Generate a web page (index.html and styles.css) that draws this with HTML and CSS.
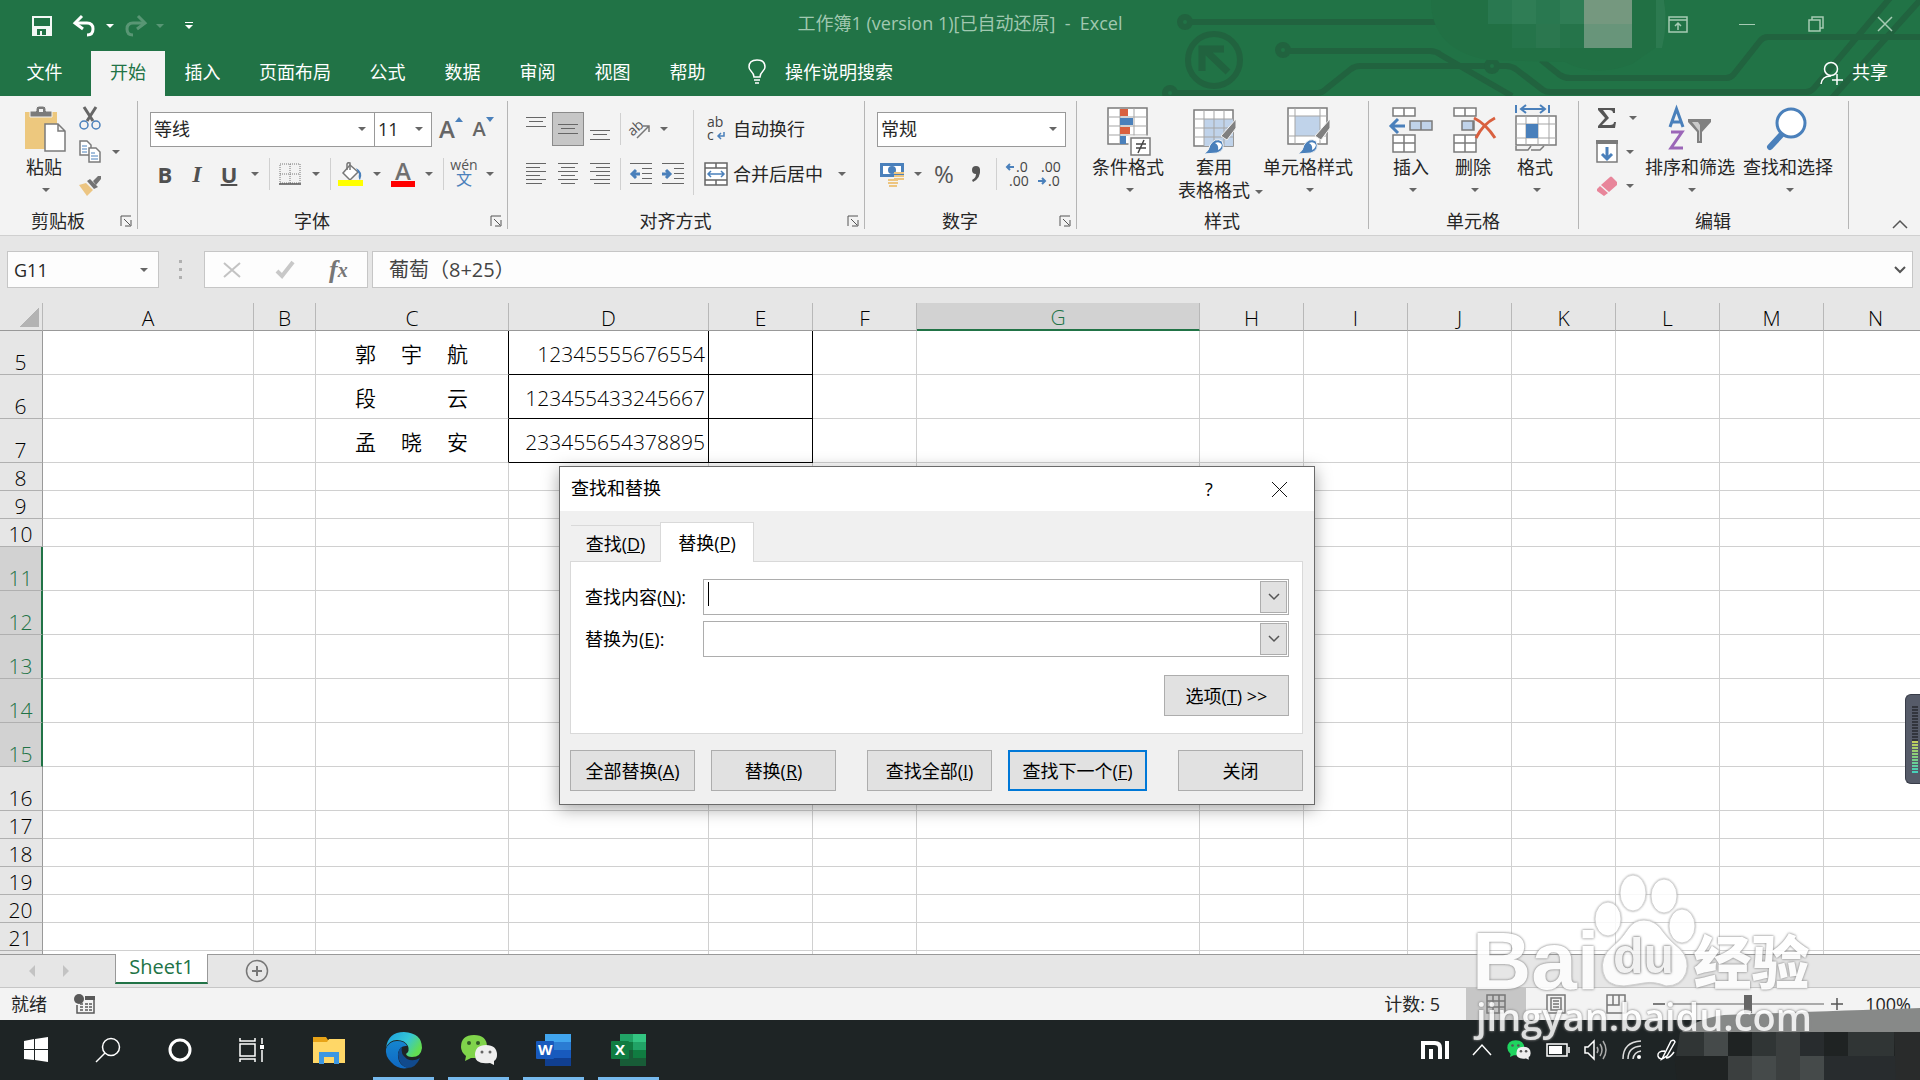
FILE: index.html
```html
<!DOCTYPE html>
<html lang="zh-CN">
<head>
<meta charset="utf-8">
<title>工作簿1 - Excel</title>
<link rel="stylesheet" href="styles.css">
</head>
<body>
<header class="top">
  <svg class="circuit" width="760" height="96" viewBox="1160 0 760 96" aria-hidden="true">
    <g fill="none" stroke="#21633f" stroke-width="6">
      <circle cx="1185" cy="22" r="5"/><path d="M1190 22H1440"/>
      <circle cx="1214" cy="60" r="26"/><path d="M1228 72L1205 50M1202 71V49H1224" stroke-width="7"/>
      <circle cx="1283" cy="50" r="5"/><path d="M1288 51H1430Q1436 51 1441 55L1512 96"/>
      <circle cx="1170" cy="93" r="5"/><path d="M1175 93H1318Q1322 93 1326 89L1351 69Q1355 66 1360 66H1487"/>
      <circle cx="1492" cy="66" r="5"/><path d="M1497 66H1506Q1512 66 1517 70L1543 90Q1546 92 1551 92H1806Q1811 92 1814 88L1890 -2"/>
      <path d="M1541 60L1560 75Q1564 78 1570 78H1726Q1731 78 1734 74L1760 41Q1763 37 1768 37H1920M1922 -2L1832 98"/>
    </g>
    <g>
      <path fill="#217044" d="M1431 0H1665Q1665 30 1655 48L1632 64Q1595 78 1565 62L1488 60Q1431 50 1431 0Z"/>
      <path fill="#297850" d="M1488 0H1584V24H1488Z"/><path fill="#2f7d55" d="M1512 0H1536V24H1512ZM1560 0H1584V24H1560Z"/>
      <path fill="#25744a" d="M1512 24H1584V48H1512Z"/><path fill="#2b774f" d="M1536 24H1560V48H1536Z"/>
      <path fill="#75987f" d="M1584 0H1632V24H1584Z"/><path fill="#68957a" d="M1584 24H1632V48H1584Z"/>
      <path fill="#2c7a50" d="M1656 0H1664Q1668 24 1662 48H1656Z"/>
    </g>
  </svg>
  <div class="titlebar">
    <div class="quick">
      <button class="q-btn" aria-label="保存"><svg width="22" height="22" viewBox="0 0 22 22"><path fill="#fff" fill-rule="evenodd" d="M1 1H21V21H1ZM3 3V11H19V3ZM6 14V20H9V16H11V20H15V14Z" opacity=".95"/></svg></button>
      <button class="q-btn" aria-label="撤消"><svg width="24" height="22" viewBox="0 0 24 22"><path d="M3 8H14Q20 8 20 14T14 20" fill="none" stroke="#fff" stroke-width="3"/><path d="M9 1L2 8L10 14" fill="none" stroke="#fff" stroke-width="3"/></svg></button>
      <button class="dd white" aria-label="撤消列表"></button>
      <button class="q-btn faded" aria-label="恢复"><svg width="24" height="22" viewBox="0 0 24 22"><path d="M21 8H10Q4 8 4 14T10 20" fill="none" stroke="#fff" stroke-width="3"/><path d="M15 1L22 8L14 14" fill="none" stroke="#fff" stroke-width="3"/></svg></button>
      <button class="dd white faded" aria-label="恢复列表"></button>
      <button class="q-btn custom" aria-label="自定义快速访问工具栏"><svg width="8" height="8" viewBox="0 0 8 8"><path fill="#fff" d="M0 0H8V1H0ZM0 3H8L4 7Z"/></svg></button>
    </div>
    <h1 class="title">工作簿1 (version 1)[已自动还原]  -  Excel</h1>
    <div class="win">
      <button aria-label="功能区显示选项"><svg width="20" height="17" viewBox="0 0 20 17"><path d="M1 1H19V16H1ZM1 4H19M10 14V7M7 10L10 7L13 10" fill="none" stroke="#a6cbb4" stroke-width="1.500"/></svg></button>
      <button aria-label="最小化"><svg width="16" height="16" viewBox="0 0 16 16"><path d="M0 8.500H16" stroke="#a6cbb4" stroke-width="1"/></svg></button>
      <button aria-label="还原"><svg width="16" height="16" viewBox="0 0 16 16"><path d="M1 4H12V15H1ZM4 4V1H15V12H12" fill="none" stroke="#a6cbb4" stroke-width="1.500"/></svg></button>
      <button aria-label="关闭窗口"><svg width="16" height="16" viewBox="0 0 16 16"><path d="M1 1L15 15M15 1L1 15" stroke="#a6cbb4" stroke-width="1.500"/></svg></button>
    </div>
  </div>
  <nav class="tabs">
    <button class="file">文件</button>
    <button class="on">开始</button>
    <button>插入</button>
    <button>页面布局</button>
    <button>公式</button>
    <button>数据</button>
    <button>审阅</button>
    <button>视图</button>
    <button>帮助</button>
    <button class="tell"><svg width="20" height="26" viewBox="0 0 20 26"><path d="M7 18Q7 15 4 12Q2 10 2 8Q2 1 10 1T18 8Q18 10 16 12Q13 15 13 18ZM7 21H13M8 24H12" fill="none" stroke="#fff" stroke-width="1.500"/></svg>操作说明搜索</button>
    <button class="share"><svg width="24" height="26" viewBox="0 0 24 26"><g fill="none" stroke="#fff" stroke-width="1.500"><circle cx="11" cy="10" r="6.500"/><path d="M1 25Q2 17 11 17M17 15V26M12 21H23"/></g></svg>共享</button>
  </nav>
</header>

<section class="ribbon">
  <div class="group clip">
    <div class="body">
      <button class="big paste"><svg width="44" height="48" viewBox="0 0 44 48"><path fill="#edc87e" d="M3 7H35V44H3Z"/><path fill="#7b7b7b" stroke="#f3f3f3" d="M8 12V6H14V4Q14 1 17 1H21Q24 1 24 4V6H30V12Z"/><path fill="#f3f3f3" d="M17 4H21V7H17Z"/><path fill="#fff" stroke="#7b7b7b" stroke-width="1.500" d="M23 19H36L43 26V46H23ZM36 19V26H43"/></svg><span>粘贴</span><i class="tri"></i></button>
      <div class="stack">
        <div class="row"><button class="ic" aria-label="剪切"><svg width="22" height="24" viewBox="0 0 22 24"><path d="M5 1L14 15M17 1L8 15" stroke="#666" stroke-width="3"/><g fill="none" stroke="#4a80bb" stroke-width="1.500"><circle cx="5" cy="19" r="4"/><circle cx="17" cy="19" r="4"/></g></svg></button></div>
        <div class="row"><button class="ic" aria-label="复制"><svg width="22" height="24" viewBox="0 0 22 24"><g fill="#fff" stroke="#7b7b7b" stroke-width="1.500"><path d="M1 1H8L12 5V15H1Z"/><path d="M10 8H17L21 12V22H10Z"/></g><path d="M3 6H8M3 9H8M3 12H8M12 13H16M12 16H19M12 19H19" stroke="#4a80bb"/></svg></button><button class="dd" aria-label="复制选项"></button></div>
        <div class="row"><button class="ic" aria-label="格式刷"><svg width="24" height="22" viewBox="0 0 24 22"><path fill="#ecc582" d="M1 10L8 8L15 15L9 21Z"/><path fill="#737373" d="M9 6L12 4L20 12L16 14ZM15 6L20 1L23 1V4L18 10Z"/></svg></button></div>
      </div>
    </div>
    <div class="cap"><span>剪贴板</span><button class="launch" aria-label="剪贴板设置"><svg width="12" height="12" viewBox="0 0 12 12"><path d="M1 11V1H11M4 4L10 10M11 5V11H5" fill="none" stroke="#555" stroke-width="1"/></svg></button></div>
  </div>

  <div class="group font">
    <div class="body col">
      <div class="line">
        <label class="sel w-font"><select aria-label="字体"><option>等线</option></select></label>
        <label class="sel w-size"><select aria-label="字号"><option>11</option></select></label>
        <button class="ic letter" aria-label="增大字号">A<svg width="8" height="5" viewBox="0 0 8 5"><path fill="#4a80bb" d="M0 5L4 0L8 5Z"/></svg></button>
        <button class="ic letter small" aria-label="减小字号">A<svg width="8" height="5" viewBox="0 0 8 5"><path fill="#4a80bb" d="M0 0L4 5L8 0Z"/></svg></button>
      </div>
      <div class="line">
        <button class="ic b">B</button><button class="ic i">I</button><button class="ic u">U</button><button class="dd" aria-label="下划线选项"></button><i class="sep"></i>
        <button class="ic" aria-label="边框"><svg width="22" height="22" viewBox="0 0 22 22"><path d="M1 1H21V20H1ZM11 1V20M1 11H21" fill="none" stroke="#777" stroke-width="1" stroke-dasharray="1 1"/><path d="M0 21H22" stroke="#555" stroke-width="1.500"/></svg></button><button class="dd" aria-label="边框选项"></button><i class="sep"></i>
        <button class="ic" aria-label="填充颜色"><svg width="26" height="26" viewBox="0 0 26 26"><path fill="#fff" stroke="#777" stroke-width="1.500" d="M12 4L20 11L12 19L5 12Z"/><path d="M9 9V3Q10 1 12 2V9" fill="none" stroke="#777" stroke-width="1.500"/><path fill="#4a80bb" d="M18 7Q26 11 22 19Q20 17 21 13Z"/><path fill="#ff0" d="M0 19H25V25H0Z"/></svg></button><button class="dd" aria-label="填充颜色选项"></button>
        <button class="ic fc" aria-label="字体颜色">A</button><button class="dd" aria-label="字体颜色选项"></button><i class="sep"></i>
        <button class="ic wen"><span>wén</span><b>文</b></button><button class="dd" aria-label="拼音选项"></button>
      </div>
    </div>
    <div class="cap"><span>字体</span><button class="launch" aria-label="字体设置"><svg width="12" height="12" viewBox="0 0 12 12"><path d="M1 11V1H11M4 4L10 10M11 5V11H5" fill="none" stroke="#555" stroke-width="1"/></svg></button></div>
  </div>

  <div class="group align">
    <div class="body">
      <div class="col">
        <div class="line">
          <button class="ic" aria-label="顶端对齐"><svg width="20" height="26" viewBox="0 0 20 26"><path d="M0 1.500H20M3 5.500H17M0 10.500H20" stroke="#666" stroke-width="1"/></svg></button>
          <button class="ic sel-on" aria-label="垂直居中"><svg width="20" height="26" viewBox="0 0 20 26"><path d="M0 8.500H20M3 12.500H17M0 17.500H20" stroke="#666" stroke-width="1"/></svg></button>
          <button class="ic" aria-label="底端对齐"><svg width="20" height="26" viewBox="0 0 20 26"><path d="M0 14.500H20M3 18.500H17M0 23.500H20" stroke="#666" stroke-width="1"/></svg></button><i class="sep"></i>
          <button class="ic" aria-label="方向"><svg width="24" height="22" viewBox="0 0 24 22"><text x="0" y="14" font-size="14" fill="#555" transform="rotate(-42 8 12)">ab</text><path d="M8 20L20 8M14 8H20V14" fill="none" stroke="#777" stroke-width="1.500"/></svg></button><button class="dd near" aria-label="方向选项"></button>
        </div>
        <div class="line">
          <button class="ic" aria-label="左对齐"><svg width="20" height="22" viewBox="0 0 20 22"><path d="M0 .5H20M0 4.500H14M0 8.500H20M0 12.500H14M0 16.500H20M0 20.500H16" stroke="#666" stroke-width="1"/></svg></button>
          <button class="ic" aria-label="居中"><svg width="20" height="22" viewBox="0 0 20 22"><path d="M0 .5H20M3 4.500H17M0 8.500H20M3 12.500H17M0 16.500H20M3 20.500H17" stroke="#666" stroke-width="1"/></svg></button>
          <button class="ic" aria-label="右对齐"><svg width="20" height="22" viewBox="0 0 20 22"><path d="M0 .5H20M6 4.500H20M0 8.500H20M6 12.500H20M0 16.500H20M4 20.500H20" stroke="#666" stroke-width="1"/></svg></button><i class="sep"></i>
          <button class="ic" aria-label="减少缩进"><svg width="22" height="22" viewBox="0 0 22 22"><path d="M0 .5H22M12 5.500H22M12 10.500H22M12 15.500H22M0 20.500H22" stroke="#666" stroke-width="1"/><path d="M10 11H3M6 7L2 11L6 15" fill="none" stroke="#4a80bb" stroke-width="3"/></svg></button>
          <button class="ic" aria-label="增加缩进"><svg width="22" height="22" viewBox="0 0 22 22"><path d="M0 .5H22M12 5.500H22M12 10.500H22M12 15.500H22M0 20.500H22" stroke="#666" stroke-width="1"/><path d="M0 11H7M4 7L8 11L4 15" fill="none" stroke="#4a80bb" stroke-width="3"/></svg></button>
        </div>
      </div>
      <i class="sep tall"></i>
      <div class="col">
        <div class="line"><button class="txt"><svg width="24" height="26" viewBox="0 0 24 26"><text x="3" y="11" font-size="14" fill="#444">ab</text><text x="3" y="24" font-size="14" fill="#444">c</text><path d="M20 16V20H14M17 17L14 20L17 23" fill="none" stroke="#4a80bb" stroke-width="1.500"/></svg>自动换行</button></div>
        <div class="line"><button class="txt"><svg width="24" height="24" viewBox="0 0 24 24"><path fill="#fff" stroke="#666" stroke-width="1.500" d="M1 1H23V23H1Z"/><path d="M1 6H23M1 18H23M12 1V6M12 18V23" stroke="#666" stroke-width="1.500"/><path d="M4 12H20M7 9L4 12L7 15M17 9L20 12L17 15" fill="none" stroke="#4a80bb" stroke-width="1.500"/></svg>合并后居中</button><button class="dd" aria-label="合并选项"></button></div>
      </div>
    </div>
    <div class="cap"><span>对齐方式</span><button class="launch" aria-label="对齐设置"><svg width="12" height="12" viewBox="0 0 12 12"><path d="M1 11V1H11M4 4L10 10M11 5V11H5" fill="none" stroke="#555" stroke-width="1"/></svg></button></div>
  </div>

  <div class="group number">
    <div class="body col">
      <div class="line"><label class="sel w-num"><select aria-label="数字格式"><option>常规</option></select></label></div>
      <div class="line">
        <button class="ic" aria-label="会计数字格式"><svg width="24" height="24" viewBox="0 0 24 24"><path fill="#4a80bb" d="M0 1H24V15H0Z"/><path fill="#fff" d="M3 4H21V12H3Z"/><circle cx="12" cy="8" r="4" fill="#4a80bb"/><path d="M14 11H24M14 14H24M14 17H24M8 18H18M8 21H18M9 24H17" stroke="#edc580" stroke-width="2"/></svg></button><button class="dd" aria-label="货币选项"></button>
        <button class="ic pct">%</button><button class="ic" aria-label="千位分隔"><svg width="10" height="18" viewBox="0 0 10 18"><circle cx="5" cy="5" r="4" fill="#555"/><path d="M9 4Q10 13 2 17L1 15Q6 12 5 7Z" fill="#555"/></svg></button><i class="sep"></i>
        <button class="ic" aria-label="增加小数位数"><svg width="24" height="26" viewBox="0 0 24 26"><text x="11" y="11" font-size="14" fill="#444">.0</text><text x="4" y="25" font-size="14" fill="#444">.00</text><path d="M9 6H2M5 3L2 6L5 9" fill="none" stroke="#4a80bb" stroke-width="2"/></svg></button>
        <button class="ic" aria-label="减少小数位数"><svg width="24" height="26" viewBox="0 0 24 26"><text x="4" y="11" font-size="14" fill="#444">.00</text><text x="11" y="25" font-size="14" fill="#444">.0</text><path d="M1 20H8M5 17L8 20L5 23" fill="none" stroke="#4a80bb" stroke-width="2"/></svg></button>
      </div>
    </div>
    <div class="cap"><span>数字</span><button class="launch" aria-label="数字设置"><svg width="12" height="12" viewBox="0 0 12 12"><path d="M1 11V1H11M4 4L10 10M11 5V11H5" fill="none" stroke="#555" stroke-width="1"/></svg></button></div>
  </div>

  <div class="group styles">
    <div class="body">
      <button class="big w-l"><svg width="44" height="48" viewBox="0 0 44 48"><path fill="#fff" stroke="#7b7b7b" stroke-width="1.500" d="M2 3H41V39H2Z"/><path d="M2 12H41M2 21H41M2 30H41M14 3V39M28 3V39" stroke="#a5a5a5"/><path fill="#d9603f" d="M14 4H22V11H14ZM14 22H24V29H14Z"/><path fill="#4a80bb" d="M14 13H27V20H14ZM14 31H20V39H14Z"/><path fill="#fff" stroke="#f3f3f3" stroke-width="3" d="M24 32H43V50H24Z"/><path fill="#fff" stroke="#7b7b7b" stroke-width="1.500" d="M25 33H44V50H25Z"/><path d="M30 39H40M30 43H40M38 35L32 48" fill="none" stroke="#444" stroke-width="1.500"/></svg><span>条件格式</span><i class="tri"></i></button>
      <button class="big w-l2"><svg width="44" height="48" viewBox="0 0 44 48"><path fill="#fff" stroke="#7b7b7b" stroke-width="1.500" d="M2 5H41V41H2Z"/><path fill="#c0d3ea" d="M12 14H41V41H12Z"/><path d="M2 14H41M2 23H41M2 32H41M12 5V41M22 5V41M32 5V41" stroke="#a5a5a5"/><use href="#brush"/></svg><span>套用<br>表格格式<i class="tri inline"></i></span></button>
      <button class="big w-x"><svg width="44" height="48" viewBox="0 0 44 48"><path fill="#fff" stroke="#7b7b7b" stroke-width="1.500" d="M2 3H41V39H2Z"/><path fill="#c0d3ea" d="M9 11H34V31H9Z"/><path d="M2 11H41M2 31H41M9 3V39M34 3V39" stroke="#a5a5a5"/><g id="brush"><path fill="#808080" stroke="#f3f3f3" d="M44 14V23L35 35L29 31Z"/><path fill="#4a80bb" stroke="#f3f3f3" d="M12 49Q17 46 18 40Q23 32 30 36Q34 45 25 48Z"/><path fill="#fff" d="M23 38Q28 36 30 40Q29 44 26 45Q27 40 23 38Z"/></g></svg><span>单元格样式</span><i class="tri"></i></button>
    </div>
    <div class="cap"><span>样式</span></div>
  </div>

  <div class="group cells">
    <div class="body">
      <button class="big w-s"><svg width="44" height="48" viewBox="0 0 44 48"><g fill="#fff" stroke="#7b7b7b" stroke-width="1.500"><path d="M4 3H26V11H4ZM15 3V11M4 30H26V47H4ZM15 30V47M4 38H26"/><path fill="#c0d3ea" d="M21 16H43V25H21ZM32 16V25"/></g><path d="M16 21H2M9 14L2 21L9 28" fill="none" stroke="#4a80bb" stroke-width="3"/></svg><span>插入</span><i class="tri"></i></button>
      <button class="big w-s"><svg width="44" height="48" viewBox="0 0 44 48"><g fill="#fff" stroke="#7b7b7b" stroke-width="1.500"><path d="M3 3H25V11H3ZM14 3V11M3 30H25V47H3ZM14 30V47M3 38H25"/><path fill="#c0d3ea" d="M11 16H23V25H11ZM22 16V25"/></g><path d="M23 13Q35 19 44 33M44 13Q32 19 25 33" fill="none" stroke="#d9603f" stroke-width="3"/></svg><span>删除</span><i class="tri"></i></button>
      <button class="big w-s"><svg width="44" height="50" viewBox="0 0 44 50"><path d="M3 1V9M36 1V9M8 5H31M13 1L8 5L13 9M27 1L32 5L27 9" fill="none" stroke="#4a80bb" stroke-width="2"/><path fill="#fff" stroke="#7b7b7b" stroke-width="1.500" d="M3 12H43V41H3Z"/><path d="M3 20H43M3 34H43M13 12V41M25 12V41M36 12V41" stroke="#a5a5a5"/><path fill="#4a80bb" d="M13 20H25V34H13Z"/><path d="M3 42V46H15L18 42M18 46H27L31 42" fill="none" stroke="#7b7b7b" stroke-width="1.500"/></svg><span>格式</span><i class="tri"></i></button>
    </div>
    <div class="cap"><span>单元格</span></div>
  </div>

  <div class="group edit">
    <div class="body">
      <div class="stack">
        <div class="row"><button class="ic" aria-label="自动求和"><svg width="22" height="22" viewBox="0 0 22 22"><path fill="#555" d="M2 1H19V6H17Q17 3 13 3H7L13 11L6 18H14Q18 18 18 15H20L19 21H2V19L9 11L2 3Z"/></svg></button><button class="dd" aria-label="求和选项"></button></div>
        <div class="row"><button class="ic" aria-label="填充"><svg width="22" height="24" viewBox="0 0 22 24"><path fill="#fff" stroke="#7b7b7b" stroke-width="1.500" d="M1 1H21V22H1Z"/><path fill="#7b7b7b" d="M0 0H22V4H0Z"/><path d="M11 7V19M6 14L11 19L16 14" fill="none" stroke="#4a80bb" stroke-width="3"/></svg></button><button class="dd near" aria-label="填充选项"></button></div>
        <div class="row"><button class="ic" aria-label="清除"><svg width="22" height="22" viewBox="0 0 22 22"><path fill="#e8859a" d="M14 2Q15 1 16 2L21 7V10L13 17L5 10ZM4 11L12 18L8 21L1 16V14Z"/></svg></button><button class="dd near" aria-label="清除选项"></button></div>
      </div>
      <button class="big w-x"><svg width="44" height="48" viewBox="0 0 44 48"><path d="M2 22L8.500 4L15 22M4 17H13" fill="none" stroke="#4a80bb" stroke-width="3"/><path d="M3 27H14L3 43H15" fill="none" stroke="#9b66b8" stroke-width="3"/><path fill="#808080" d="M20 14H43V17L34 27V38H29V27L20 17Z"/><path fill="#c9c9c9" d="M24 17H30L32 20V36H31V26Z"/></svg><span>排序和筛选</span><i class="tri"></i></button>
      <button class="big w-x"><svg width="44" height="48" viewBox="0 0 44 48"><path d="M4 42L17 28" stroke="#4a80bb" stroke-width="6" stroke-linecap="round"/><circle cx="25" cy="18" r="14" fill="#fff" stroke="#4a80bb" stroke-width="3"/></svg><span>查找和选择</span><i class="tri"></i></button>
    </div>
    <div class="cap"><span>编辑</span></div>
  </div>
  <button class="collapse" aria-label="折叠功能区"><svg width="16" height="9" viewBox="0 0 16 9"><path d="M1 8L8 1L15 8" fill="none" stroke="#555" stroke-width="1.500"/></svg></button>
</section>

<section class="fbar">
  <label class="namebox"><input value="G11" aria-label="名称框"><i class="tri"></i></label>
  <span class="dots"></span>
  <div class="fbtns">
    <button aria-label="取消"><svg width="18" height="16" viewBox="0 0 18 16"><path d="M1 1L17 15M17 1L1 15" stroke="#c3c3c3" stroke-width="2"/></svg></button>
    <button aria-label="输入"><svg width="20" height="18" viewBox="0 0 20 18"><path d="M2 10L7 15L18 1" fill="none" stroke="#c8c8c8" stroke-width="4"/></svg></button>
    <button class="fx" aria-label="插入函数">f<sub>x</sub></button>
  </div>
  <label class="formula"><input value="葡萄（8+25）" aria-label="编辑栏"><svg width="12" height="8" viewBox="0 0 12 8"><path d="M1 1L6 6L11 1" fill="none" stroke="#555" stroke-width="2"/></svg></label>
</section>

<main class="sheet">
<table>
<colgroup><col class="c-h"><col class="c-a"><col class="c-b"><col class="c-c"><col class="c-d"><col class="c-n"><col class="c-n"><col class="c-g"><col class="c-n"><col class="c-n"><col class="c-n"><col class="c-n"><col class="c-n"><col class="c-n"><col class="c-n"></colgroup>
<thead><tr><th class="corner"></th><th>A</th><th>B</th><th>C</th><th>D</th><th>E</th><th>F</th><th class="on">G</th><th>H</th><th>I</th><th>J</th><th>K</th><th>L</th><th>M</th><th>N</th></tr></thead>
<tbody>
<tr class="t bx"><th>5</th><td></td><td></td><td><div class="spread"><span>郭</span><span>宇</span><span>航</span></div></td><td>12345555676554</td><td></td><td></td><td></td><td></td><td></td><td></td><td></td><td></td><td></td><td></td></tr>
<tr class="t bx"><th>6</th><td></td><td></td><td><div class="spread"><span>段</span><span>云</span></div></td><td>123455433245667</td><td></td><td></td><td></td><td></td><td></td><td></td><td></td><td></td><td></td><td></td></tr>
<tr class="t bx"><th>7</th><td></td><td></td><td><div class="spread"><span>孟</span><span>晓</span><span>安</span></div></td><td>233455654378895</td><td></td><td></td><td></td><td></td><td></td><td></td><td></td><td></td><td></td><td></td></tr>
<tr><th>8</th><td></td><td></td><td></td><td></td><td></td><td></td><td></td><td></td><td></td><td></td><td></td><td></td><td></td><td></td></tr>
<tr><th>9</th><td></td><td></td><td></td><td></td><td></td><td></td><td></td><td></td><td></td><td></td><td></td><td></td><td></td><td></td></tr>
<tr><th>10</th><td></td><td></td><td></td><td></td><td></td><td></td><td></td><td></td><td></td><td></td><td></td><td></td><td></td><td></td></tr>
<tr class="t"><th class="on">11</th><td></td><td></td><td></td><td></td><td></td><td></td><td></td><td></td><td></td><td></td><td></td><td></td><td></td><td></td></tr>
<tr class="t"><th class="on">12</th><td></td><td></td><td></td><td></td><td></td><td></td><td></td><td></td><td></td><td></td><td></td><td></td><td></td><td></td></tr>
<tr class="t"><th class="on">13</th><td></td><td></td><td></td><td></td><td></td><td></td><td></td><td></td><td></td><td></td><td></td><td></td><td></td><td></td></tr>
<tr class="t"><th class="on">14</th><td></td><td></td><td></td><td></td><td></td><td></td><td></td><td></td><td></td><td></td><td></td><td></td><td></td><td></td></tr>
<tr class="t"><th class="on">15</th><td></td><td></td><td></td><td></td><td></td><td></td><td></td><td></td><td></td><td></td><td></td><td></td><td></td><td></td></tr>
<tr class="t"><th>16</th><td></td><td></td><td></td><td></td><td></td><td></td><td></td><td></td><td></td><td></td><td></td><td></td><td></td><td></td></tr>
<tr><th>17</th><td></td><td></td><td></td><td></td><td></td><td></td><td></td><td></td><td></td><td></td><td></td><td></td><td></td><td></td></tr>
<tr><th>18</th><td></td><td></td><td></td><td></td><td></td><td></td><td></td><td></td><td></td><td></td><td></td><td></td><td></td><td></td></tr>
<tr><th>19</th><td></td><td></td><td></td><td></td><td></td><td></td><td></td><td></td><td></td><td></td><td></td><td></td><td></td><td></td></tr>
<tr><th>20</th><td></td><td></td><td></td><td></td><td></td><td></td><td></td><td></td><td></td><td></td><td></td><td></td><td></td><td></td></tr>
<tr><th>21</th><td></td><td></td><td></td><td></td><td></td><td></td><td></td><td></td><td></td><td></td><td></td><td></td><td></td><td></td></tr>
<tr><th></th><td></td><td></td><td></td><td></td><td></td><td></td><td></td><td></td><td></td><td></td><td></td><td></td><td></td><td></td></tr>
</tbody>
</table>
</main>

<div class="sheetbar">
  <button class="arrow" aria-label="上一个工作表"><svg width="8" height="12" viewBox="0 0 8 12"><path fill="#c3c3c3" d="M7 0V12L1 6Z"/></svg></button>
  <button class="arrow" aria-label="下一个工作表"><svg width="8" height="12" viewBox="0 0 8 12"><path fill="#c3c3c3" d="M1 0V12L7 6Z"/></svg></button>
  <button class="stab">Sheet1</button>
  <button class="add" aria-label="新工作表"><svg width="24" height="24" viewBox="0 0 24 24"><g fill="none" stroke="#777" stroke-width="1.500"><circle cx="12" cy="12" r="10.500"/><path d="M7 12H17M12 7V17" stroke-width="2"/></g></svg></button>
</div>

<footer class="status">
  <span>就绪</span>
  <svg class="macro" width="22" height="20" viewBox="0 0 22 20"><circle cx="5" cy="5" r="5" fill="#595959"/><path fill="#595959" d="M11 2H21V6H11Z"/><path d="M3 11V19H20V6M6 10H9M11 10H14M15 10H18M6 13H9M11 13H14M15 13H18M6 16H9M11 16H14M15 16H18" fill="none" stroke="#595959" stroke-width="1.500"/></svg>
  <span class="count">计数: 5</span>
  <button class="view on" aria-label="普通"><svg width="20" height="20" viewBox="0 0 20 20"><path d="M1 1H19V19H1ZM1 7H19M1 13H19M7 1V19M13 1V19" fill="none" stroke="#777" stroke-width="1.500"/></svg></button>
  <button class="view" aria-label="页面布局视图"><svg width="20" height="20" viewBox="0 0 20 20"><path d="M1 1H19V19H1ZM5 4H15V16H5ZM7 7H13M7 10H13M7 13H13" fill="none" stroke="#777" stroke-width="1.500"/></svg></button>
  <button class="view" aria-label="分页预览"><svg width="20" height="20" viewBox="0 0 20 20"><path d="M1 1H19V19H1ZM1 11H13V1M7 1V11" fill="none" stroke="#777" stroke-width="1.500"/></svg></button>
  <button class="zoom" aria-label="缩小"><svg width="12" height="12" viewBox="0 0 12 12"><path d="M0 6H12" stroke="#555" stroke-width="1.500"/></svg></button>
  <input class="slider" type="range" min="0" max="100" value="50" aria-label="显示比例">
  <button class="zoom" aria-label="放大"><svg width="12" height="12" viewBox="0 0 12 12"><path d="M0 6H12M6 0V12" stroke="#555" stroke-width="1.500"/></svg></button>
  <span class="pc">100%</span>
</footer>

<nav class="taskbar">
  <button aria-label="开始菜单"><svg width="26" height="26" viewBox="0 0 26 26"><path fill="#fff" d="M1 4L11 2V12H1ZM12 2L25 0V12H12ZM1 13H11V23L1 22ZM12 13H25V25L12 23Z"/></svg></button>
  <button aria-label="搜索"><svg width="26" height="26" viewBox="0 0 26 26"><g fill="none" stroke="#fff" stroke-width="1.500"><circle cx="16" cy="10" r="8.500"/><path d="M10 16L1 25"/></g></svg></button>
  <button aria-label="Cortana"><svg width="26" height="26" viewBox="0 0 26 26"><circle cx="13" cy="13" r="10" fill="none" stroke="#fff" stroke-width="3"/></svg></button>
  <button class="views" aria-label="任务视图"><svg width="26" height="26" viewBox="0 0 26 26"><path d="M1 1V4H16V1M1 7H16V19H1ZM1 25V22H16V25M23 1V7M23 13V25" fill="none" stroke="#fff" stroke-width="1.500"/><path fill="#fff" d="M21 8H25V12H21Z"/></svg></button>
  <button class="app" aria-label="文件资源管理器"><svg width="34" height="30" viewBox="0 0 34 30"><path fill="#e8a317" d="M1 2H14L16 5H32V12H1Z"/><path fill="#ffd767" d="M1 7H15L17 4H33V28H1Z"/><path fill="#3c97e3" d="M7 17H27V29H22V22H12V29H7Z"/></svg></button>
  <button class="app run" aria-label="Edge"><svg width="38" height="38" viewBox="0 0 38 38"><defs><linearGradient id="eg" x1="0" x2="1" y1="0" y2=".5"><stop stop-color="#1b9de2"/><stop offset=".6" stop-color="#35c6d6"/><stop offset="1" stop-color="#62dd52"/></linearGradient><linearGradient id="eb" x1="0" x2="0" y1="0" y2="1"><stop stop-color="#1585cf"/><stop offset="1" stop-color="#0f68c3"/></linearGradient></defs><path fill="url(#eg)" d="M1 17Q3 1 19 1Q37 2 37 17Q36 26 27 26Q22 26 21 23Q25 20 23 15Q20 9 12 9Q4 9 1 17Z"/><path fill="url(#eb)" d="M1 18Q4 10 12 10Q20 10 22 15Q15 14 13 22Q12 34 23 37Q13 39 6 31Q0 25 1 18Z"/><path fill="#114a8d" d="M13 23Q14 17 17 16Q15 23 22 28Q28 31 35 27Q31 37 22 37Q13 33 13 23Z"/></svg></button>
  <button class="app run" aria-label="微信"><svg width="38" height="34" viewBox="0 0 38 34"><path fill="#80d44b" d="M14 2Q27 2 27 14T14 25L11 25L5 28L6 23Q1 19 1 14Q1 2 14 2Z"/><circle cx="9" cy="10" r="2" fill="#315c25"/><circle cx="18" cy="10" r="2" fill="#315c25"/><path fill="#eee" d="M26 12Q37 12 37 22Q37 26 34 28L34 32L30 30Q15 32 15 22Q15 12 26 12Z"/><circle cx="22" cy="19" r="1.500" fill="#666"/><circle cx="30" cy="19" r="1.500" fill="#666"/></svg></button>
  <button class="app run" aria-label="Word"><svg width="38" height="34" viewBox="0 0 38 34"><path fill="#41a5ee" d="M10 1H36V9H10Z"/><path fill="#2b7cd3" d="M10 9H36V17H10Z"/><path fill="#185abd" d="M10 17H36V25H10Z"/><path fill="#103f91" d="M10 25H36V33H10Z"/><rect y="8" x="1" width="18" height="18" rx="1" fill="#185abd"/><text x="3" y="22" font-size="15" font-weight="700" fill="#fff">W</text></svg></button>
  <button class="app run" aria-label="Excel"><svg width="38" height="34" viewBox="0 0 38 34"><path fill="#21a366" d="M10 1H23V9H10Z"/><path fill="#33c481" d="M23 1H36V9H23Z"/><path fill="#107c41" d="M10 9H23V17H10ZM23 17H36V25H23Z"/><path fill="#21a366" d="M23 9H36V17H23Z"/><path fill="#185c37" d="M10 17H23V25H36V33H10Z"/><rect y="8" x="1" width="18" height="18" rx="1" fill="#107c41"/><text x="5" y="22" font-size="15" font-weight="700" fill="#fff">X</text></svg></button>
  <div class="tray">
    <svg width="30" height="20" viewBox="0 0 30 20"><path fill="#fff" d="M1 1H15Q22 1 22 8V19H18V8Q18 5 14 5H5V19H1ZM9 9H13V19H9ZM25 1H29V19H25Z"/></svg>
    <svg width="20" height="12" viewBox="0 0 20 12"><path d="M1 11L10 1L19 11" fill="none" stroke="#fff" stroke-width="1.500"/></svg>
    <svg width="26" height="22" viewBox="0 0 38 34"><path fill="#1fd45f" d="M14 2Q27 2 27 14T14 25L11 25L5 28L6 23Q1 19 1 14Q1 2 14 2Z"/><path fill="#eee" d="M26 12Q37 12 37 22Q37 26 34 28L34 32L30 30Q15 32 15 22Q15 12 26 12Z"/><g fill="#555"><circle cx="9" cy="10" r="2"/><circle cx="18" cy="10" r="2"/><circle cx="22" cy="19" r="2"/><circle cx="30" cy="19" r="2"/></g></svg>
    <svg width="24" height="14" viewBox="0 0 24 14"><path d="M1 1H21V13H1ZM23 4V10" fill="none" stroke="#fff" stroke-width="1.500"/><path fill="#fff" d="M3 3H16V11H3Z"/></svg>
    <svg width="24" height="20" viewBox="0 0 24 20"><path d="M1 7H4L10 1V19L4 13H1Z" fill="none" stroke="#fff" stroke-width="1.500"/><path d="M13 7Q15 10 13 13M16 4Q20 10 16 16M19 1Q25 10 19 19" fill="none" stroke="#aaa" stroke-width="1.500"/></svg>
    <svg width="20" height="20" viewBox="0 0 20 20"><path d="M1 19Q1 2 19 1M6 19Q6 7 19 6M11 19Q12 12 19 11" fill="none" stroke="#ddd" stroke-width="1.500"/><circle cx="17" cy="17" r="2" fill="#fff"/></svg>
    <svg width="20" height="22" viewBox="0 0 20 22"><path d="M6 20L15 2Q18 0 19 3L11 17ZM9 12Q1 12 2 17Q3 21 8 19M10 19Q14 19 18 13" fill="none" stroke="#fff" stroke-width="1.500"/></svg>
  </div>
</nav>

<svg class="mosaic" width="246" height="74" viewBox="0 0 246 74" aria-hidden="true">
  <path fill="#1f2323" d="M3 74Q-3 44 8 26H246V74Z"/>
  <path fill="#878988" d="M8 26Q24 12 50 9Q130 6 246 2V26Z"/>
  <g><path fill="#303535" d="M6 26H30V50H2ZM78 26H102V50H78ZM174 26H220V50H174Z"/><path fill="#454a4a" d="M30 26H54V50H30ZM78 50H102V74H78ZM126 50H150V74H126Z"/><path fill="#3b3f3f" d="M102 26H126V50H102ZM54 50H78V74H54ZM102 50H126V74H102Z"/><path fill="#282c2e" d="M126 26H150V50H126ZM150 50H222V74H150Z"/><path fill="#292b2b" d="M220 26H246V74H222Z"/></g>
</svg>

<div class="meter" aria-hidden="true"><i class="off"></i><i class="lit"></i></div>

<div class="mark" aria-hidden="true">
  <div class="logo">
    <span class="bai">Bai</span>
    <span class="paw"><svg width="100" height="120" viewBox="0 0 100 120"><g fill="#fff" stroke="#ccc" stroke-width="1"><ellipse cx="14" cy="46" rx="13" ry="17"/><ellipse cx="39" cy="20" rx="13" ry="18"/><ellipse cx="70" cy="23" rx="13" ry="17"/><ellipse cx="88" cy="53" rx="13" ry="17"/><path d="M50 47Q62 47 70 60Q76 68 86 76Q96 86 92 100Q87 113 72 113Q60 108 50 110Q38 112 30 113Q12 113 9 99Q6 84 18 74Q28 66 34 56Q40 47 50 47Z"/></g></svg><b>du</b></span>
    <span class="jy">经验</span>
  </div>
  <div class="url">jingyan.baidu.com</div>
</div>

<section class="dialog" role="dialog" aria-labelledby="dt">
  <div class="d-title"><h2 id="dt">查找和替换</h2><button aria-label="帮助信息">?</button><button aria-label="关闭对话框"><svg width="17" height="17" viewBox="0 0 17 17"><path d="M1 1L16 16M16 1L1 16" stroke="#111" stroke-width="1"/></svg></button></div>
  <div class="d-tabs"><button>查找(<u>D</u>)</button><button class="on">替换(<u>P</u>)</button></div>
  <div class="d-panel">
    <div class="field"><label for="f1">查找内容(<u>N</u>):</label><div class="combo"><i class="caret"></i><input id="f1" type="text"><button aria-label="查找历史"><svg width="12" height="8" viewBox="0 0 12 8"><path d="M1 1L6 6L11 1" fill="none" stroke="#555" stroke-width="1.500"/></svg></button></div></div>
    <div class="field"><label for="f2">替换为(<u>E</u>):</label><div class="combo"><input id="f2" type="text"><button aria-label="替换历史"><svg width="12" height="8" viewBox="0 0 12 8"><path d="M1 1L6 6L11 1" fill="none" stroke="#555" stroke-width="1.500"/></svg></button></div></div>
    <button class="btn opt">选项(<u>T</u>) &gt;&gt;</button>
  </div>
  <div class="d-foot">
    <button class="btn">全部替换(<u>A</u>)</button>
    <button class="btn g1">替换(<u>R</u>)</button>
    <button class="btn g2">查找全部(<u>I</u>)</button>
    <button class="btn g1 def">查找下一个(<u>F</u>)</button>
    <button class="btn g2">关闭</button>
  </div>
</section>
</body>
</html>
```
FILE: styles.css
```css
* { box-sizing: border-box; }
body {
  margin: 0;
  height: 100vh;
  display: flex;
  flex-direction: column;
  overflow: hidden;
  background: #e6e6e6;
  color: #262626;
  font: 18px/24px "Open Sans", "Noto Sans CJK SC", sans-serif;
}
button, input, select { font: inherit; color: inherit; background: none; border: 0; padding: 0; margin: 0; border-radius: 0; }
input, select { outline: 0; min-width: 0; }
button { display: flex; align-items: center; justify-content: center; white-space: nowrap; }
svg { display: block; flex: none; overflow: visible; }
h1, h2 { margin: 0; font-size: 18px; font-weight: 400; }

/* Title bar and ribbon tabs */
.top { position: relative; background: #217346; color: #fff; flex: none; }
.circuit { position: absolute; top: 0; right: 0; overflow: hidden; }
.titlebar { position: relative; display: grid; grid-template-columns: 1fr auto 1fr; height: 51px; }
.quick { display: flex; align-items: center; padding-left: 25px; }
.q-btn { width: 34px; height: 34px; }
.quick .q-btn:nth-child(2) { margin-left: 9px; }
.quick .custom { margin-left: 4px; }
.title { line-height: 46px; white-space: pre; color: #a0c8b0; }
.win { display: flex; justify-content: flex-end; height: 48px; padding-right: 1px; }
.win button { width: 69px; }
.faded { opacity: .25; }
.tabs { position: relative; display: flex; height: 45px; }
.tabs button { padding: 0 19px 3px; min-width: 75px; }
.tabs .file { width: 91px; padding-right: 21px; }
.tabs .on { background: #f3f3f3; color: #217346; min-width: 73px; }
.tabs .tell { gap: 18px; padding-left: 22px; }
.tabs .share { margin-left: auto; gap: 8px; padding-right: 32px; }

/* Shared little parts */
.tri, .dd::after, .sel::after { content: ""; display: block; border: 4px solid transparent; border-top: 4px solid #666; border-bottom: 0; }
.dd { width: 20px; height: 24px; flex: none; }
.dd.near { width: 14px; }
.dd.white::after { border-top-color: #fff; }
.quick .dd { width: 16px; }
.ic { width: 32px; height: 34px; flex: none; }
.sep { width: 1px; height: 32px; margin: 0 4px; background: #d0d0d0; flex: none; }
.sep.tall { height: 85px; margin-top: 9px; }

/* Ribbon */
.ribbon { display: flex; flex: none; height: 140px; background: #f3f3f3; border-bottom: 1px solid #d0d0d0; padding: 5px 0 6px; }
.group { display: flex; flex-direction: column; border-right: 1px solid #b5b5b5; }
.clip { width: 138px; }
.font { width: 370px; }
.align { width: 357px; }
.number { width: 212px; }
.styles { width: 292px; }
.cells { width: 210px; }
.edit { width: 270px; }
.body { display: flex; flex: 1; }
.col { display: flex; flex-direction: column; gap: 8px; padding-top: 10px; }
.line { display: flex; align-items: center; height: 36px; }
.col > .line + .line { height: 38px; }
.cap { display: flex; height: 24px; margin-bottom: -4px; padding-right: 1px; }
.cap span { flex: 1; text-align: center; line-height: 24px; }
.launch { width: 20px; }
.big { flex-direction: column; justify-content: flex-start; padding-top: 3px; }
.big svg { height: 50px; margin-bottom: 2px; }
.big span { line-height: 23px; text-align: center; }
.big .tri { margin: 9px 0 0 4px; }
.big .tri.inline { display: inline-block; margin: 0 -13px 3px 5px; }
.stack { display: flex; flex-direction: column; }
.row { display: flex; align-items: center; height: 34px; }
.paste { width: 70px; padding-left: 18px; }
.clip .stack { padding-left: 4px; }
.font .body, .number .body { padding-left: 11px; }
.align .body { padding-left: 12px; }
.styles .body { padding-left: 10px; }
.cells .body { padding-left: 11px; }
.edit .body { padding-left: 12px; }
.edit .stack { width: 50px; }
.w-l { width: 82px; }
.w-l2 { width: 90px; }
.w-x { width: 98px; }
.w-s { width: 62px; }
.sel { display: flex; align-items: center; height: 35px; padding: 0 8px 0 3px; border: 1px solid #999; background: #fff; }
.sel select { appearance: none; flex: 1; height: 30px; }
.w-font { width: 225px; margin-left: 1px; }
.w-size { width: 58px; margin-left: -1px; margin-right: 3px; }
.w-num { width: 189px; margin-left: 1px; }
.letter { font-size: 24px; font-weight: 600; color: #666; }
.letter svg { margin-bottom: 20px; }
.letter.small { font-size: 20px; }
.b, .u { font-size: 22px; font-weight: 700; color: #505050; }
.u { text-decoration: underline; text-decoration-thickness: 2px; }
.i { font: italic 700 24px/24px "Liberation Serif", serif; color: #505050; }
.fc { position: relative; font-size: 24px; font-weight: 600; color: #707070; line-height: 24px; padding-bottom: 6px; }
.fc::after { content: ""; position: absolute; left: 4px; right: 4px; bottom: 4px; height: 6px; background: red; }
.wen { flex-direction: column; font-size: 14px; line-height: 10px; color: #555; }
.wen b { font-size: 16px; line-height: 18px; font-weight: 400; color: #4a80bb; }
.sel-on { background: #c6c6c6; border: 1px solid #8a8a8a; }
.txt { gap: 5px; margin-left: 6px; }
.txt + .dd { margin-left: 9px; }
.pct { font-size: 24px; color: #555; }
.collapse { align-self: flex-end; margin-left: auto; width: 40px; height: 10px; }

/* Formula bar */
.fbar { display: flex; flex: none; height: 67px; padding: 15px 7px; }
.fbar label, .fbtns { display: flex; align-items: center; background: #fdfdfd; border: 1px solid #c6c6c6; }
.namebox { width: 152px; padding: 0 10px 0 6px; }
.namebox input { flex: 1; }
.dots { width: 3px; margin: 9px 22px 9px 20px; background: repeating-linear-gradient(#b0b0b0 0 3px, transparent 3px 8px); }
.fbtns { width: 164px; padding-right: 2px; }
.fbtns button { flex: 1; }
.fbtns .fx { font: italic 700 26px/26px "Liberation Serif", serif; color: #777; }
.fx sub { font-size: 20px; vertical-align: -2px; }
.formula { flex: 1; margin-left: 4px; padding: 0 6px 0 16px; }
.formula input { flex: 1; font-size: 20px; color: #444; }

/* Grid */
.sheet { flex: 1; min-height: 0; overflow: hidden; background: #fff; }
table { table-layout: fixed; width: 1928px; border-collapse: separate; border-spacing: 0; font-size: 21px; line-height: 24px; color: #000; font-weight: 300; }
.c-h { width: 43px; }
.c-a { width: 211px; }
.c-b { width: 62px; }
.c-c { width: 193px; }
.c-d { width: 200px; }
.c-n { width: 104px; }
.c-g { width: 283px; }
th, td { height: 28px; padding: 0; border-right: 1px solid #d0d0d0; border-bottom: 1px solid #d0d0d0; }
th { font-weight: 300; background: #e6e6e6; vertical-align: bottom; text-align: center; }
td { font-weight: 350; }
thead th { border-right-color: #b8b8b8; border-bottom-color: #999; }
tbody th { border-right-color: #999; border-bottom-color: #b0b0b0; padding-right: 1px; }
thead th.on { background: #d2d2d2; color: #217346; border-bottom: 2px solid #217346; }
tbody th.on { background: #d2d2d2; color: #217346; border-right: 2px solid #217346; padding-right: 0; }
.corner { background: linear-gradient(135deg, transparent 50%, #b3b3b3 50%) 20px 5px/19px 19px no-repeat #e6e6e6; }
.t th, .t td { height: 44px; }
.t td { padding-top: 2px; }
.bx td:nth-child(4) { border-right-color: #000; }
.bx td:nth-child(5), .bx td:nth-child(6) { border-color: #000; }
.bx td:nth-child(5) { text-align: right; padding-right: 3px; }
.spread { display: flex; justify-content: space-between; margin: 0 40px 0 39px; }

/* Sheet tabs */
.sheetbar { display: flex; flex: none; height: 33px; border-top: 1px solid #999; padding-left: 15px; }
.arrow { width: 34px; }
.stab { width: 93px; height: 30px; margin: -1px 36px 0 32px; background: #fff; border: 1px solid #999; border-top: 0; border-bottom: 2px solid #217346; color: #217346; font-size: 20px; font-weight: 500; padding-bottom: 3px; }
.add { width: 26px; }

/* Status bar */
.status { display: flex; align-items: center; flex: none; height: 33px; background: #f3f3f3; border-top: 1px solid #c6c6c6; padding: 0 9px 0 11px; }
.macro { margin-left: 27px; }
.count { margin-left: auto; margin-right: 26px; }
.view { width: 60px; height: 32px; }
.view.on { background: #c6c6c6; }
.zoom { width: 26px; height: 32px; }
.slider { appearance: none; width: 152px; height: 20px; background: linear-gradient(#aaa, #aaa) center/100% 2px no-repeat; }
.slider::-webkit-slider-thumb { appearance: none; width: 8px; height: 18px; background: #666; }
.pc { width: 61px; text-align: right; }

/* Taskbar */
.taskbar { display: flex; flex: none; height: 60px; background: #1e2425; }
.taskbar button { width: 72px; }
.taskbar .views { margin-right: 3px; }
.taskbar .app { width: 75px; position: relative; }
.run::after { content: ""; position: absolute; left: 7px; right: 7px; bottom: 0; height: 3px; background: #76b9ed; }
.tray { display: flex; align-items: center; gap: 14px; margin-left: auto; padding-right: 244px; }
.tray svg:first-child { margin-right: 8px; }

/* Overlays */
.mosaic { position: absolute; right: 0; bottom: 0; }
.meter { position: absolute; right: 0; top: 694px; width: 15px; height: 90px; padding: 11px 2px 9px 6px; background: #565b69; border: 1px solid #383c48; border-right: 0; border-radius: 6px 0 0 6px; }
.meter i { display: block; height: 35px; background: repeating-linear-gradient(#32353d 0 2px, #565b69 2px 3px); }
.meter .lit { height: 33px; background: repeating-linear-gradient(transparent 0 2px, #565b69 2px 3px), linear-gradient(#c5d05a, #7fd080, #3fd0c0); }
.mark { position: absolute; right: 104px; bottom: 41px; width: 344px; color: #fff; opacity: .85; text-shadow: 0 0 2px #888, 0 0 3px #888; }
.logo { display: flex; align-items: flex-end; height: 120px; font-weight: 700; }
.bai { font: 700 82px/64px "Liberation Sans", sans-serif; }
.paw { position: relative; margin-left: -6px; filter: drop-shadow(0 0 1px #999); }
.paw b { position: absolute; left: 0; right: 0; bottom: 12px; text-align: center; font: 700 50px/50px "Liberation Sans", sans-serif; color: #f4f4f4; text-shadow: 0 0 2px #666, 0 0 3px #666; }
.jy { font: 900 58px/68px "Noto Sans CJK SC", sans-serif; }
.url { font: 600 38px/46px "Open Sans", sans-serif; text-align: center; }

/* Find and replace */
.dialog { position: absolute; left: 559px; top: 466px; width: 756px; background: #f0f0f0; border: 1px solid #6b6b6b; box-shadow: 0 4px 16px rgba(0, 0, 0, .35); color: #000; padding-bottom: 13px; }
.d-title { display: flex; height: 44px; background: #fff; }
.d-title h2 { flex: 1; padding-left: 11px; line-height: 43px; }
.d-title button { width: 70px; }
.d-tabs { display: flex; align-items: flex-end; height: 50px; padding-left: 11px; }
.d-tabs button { height: 36px; width: 89px; border-top: 1px solid #d9d9d9; }
.d-tabs .on { position: relative; height: 40px; width: 94px; margin-bottom: -1px; background: #fff; border: 1px solid #d9d9d9; border-bottom: 0; }
.d-panel { display: flex; flex-direction: column; gap: 6px; margin: 0 11px 0 10px; padding: 17px 13px 17px 14px; background: #fff; border: 1px solid #d9d9d9; }
.field { display: flex; align-items: center; }
.field label { width: 118px; }
.combo { display: flex; flex: 1; height: 36px; padding: 1px; border: 1px solid #adadad; }
.combo input { flex: 1; padding: 0 4px; }
.combo button { width: 27px; background: #e1e1e1; border: 1px solid #adadad; }
.caret { width: 1px; height: 24px; margin: 1px 0 0 3px; background: #000; }
.btn { height: 41px; min-width: 125px; background: #e1e1e1; border: 1px solid #adadad; }
.opt { align-self: flex-end; margin-top: 12px; }
.d-foot { display: flex; margin: 16px 11px 0 10px; }
.g1 { margin-left: 16px; }
.g2 { margin-left: 31px; }
.def { width: 141px; border: 2px solid #0078d7; }
```
